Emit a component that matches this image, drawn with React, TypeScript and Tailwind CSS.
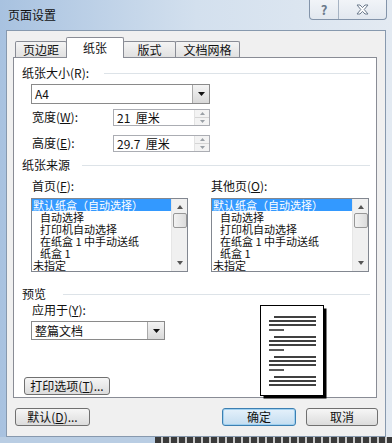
import React from 'react';

const font = "font-['Noto_Sans_CJK_SC','Noto_Sans_CJK_JP',sans-serif]";

function Key({ k }: { k: string }) {
    return <span className="underline">{k}</span>;
}

function Section({ label, lineGap }: { label: string; lineGap: string }) {
    // group caption with the etched line to the right
    return (
        <div className="flex items-center h-[14px] pl-[8px] pr-[6px]">
            <span className="leading-[14px] whitespace-nowrap">{label}</span>
            <div className={`flex-1 h-px bg-[#dde3e8] ${lineGap}`} />
        </div>
    );
}

function DropArrow() {
    return (
        <div className="w-[17px] h-full border-l border-[#a9a9a9] bg-gradient-to-b from-[#f4f4f4] to-[#d9d9d9] flex items-center justify-center">
            <svg width="7" height="4" viewBox="0 0 7 4">
                <path d="M0 0 H7 L3.5 4 Z" fill="#111" />
            </svg>
        </div>
    );
}

function Spin({ value, unit }: { value: string; unit: string }) {
    return (
        <div className="w-[97px] h-[17px] border border-[#abadb3] bg-white flex">
            <div className="flex-1 pl-[3px] leading-[15px] whitespace-pre">
                {value}  {unit}
            </div>
            <div className="w-[15px] flex flex-col border-l border-[#e3e3e3]">
                <div className="flex-1 flex items-center justify-center bg-[#f3f3f3] border-b border-[#d5d5d5]">
                    <svg width="5" height="3" viewBox="0 0 5 3"><path d="M0 3 L2.5 0 L5 3 Z" fill="#9aa0a6" /></svg>
                </div>
                <div className="flex-1 flex items-center justify-center bg-[#f3f3f3]">
                    <svg width="5" height="3" viewBox="0 0 5 3"><path d="M0 0 H5 L2.5 3 Z" fill="#9aa0a6" /></svg>
                </div>
            </div>
        </div>
    );
}

const trays = [
    { t: '默认纸盒（自动选择）', ind: false, sel: true },
    { t: '自动选择', ind: true, sel: false },
    { t: '打印机自动选择', ind: true, sel: false },
    { t: '在纸盒 1 中手动送纸', ind: true, sel: false },
    { t: '纸盒 1', ind: true, sel: false },
    { t: '未指定', ind: false, sel: false },
];

function TrayList({ width }: { width: string }) {
    return (
        <div className={`${width} h-[74px] border border-[#828790] bg-white flex overflow-hidden`}>
            <div className="flex-1 overflow-hidden text-[11px]">
                {trays.map((it) => (
                    <div
                        key={it.t}
                        className={`h-[12px] leading-[12px] whitespace-pre ${it.ind ? 'pl-[8px]' : 'pl-[1px]'} ${it.sel ? 'bg-[#3399ff] text-white' : ''}`}
                    >
                        {it.t}
                    </div>
                ))}
            </div>
            <div className="w-[16px] bg-[#f0f0f0] border-l border-[#e6e6e6] flex flex-col items-center">
                <svg className="mt-[6px]" width="6" height="4" viewBox="0 0 6 4"><path d="M0 4 L3 0 L6 4 Z" fill="#555" /></svg>
                <div className="mt-[4px] w-[14px] h-[15px] rounded-[2px] border border-[#979797] bg-gradient-to-r from-[#f2f2f2] to-[#dcdcdc]" />
                <svg className="mt-auto mb-[6px]" width="6" height="4" viewBox="0 0 6 4"><path d="M0 0 H6 L3 4 Z" fill="#555" /></svg>
            </div>
        </div>
    );
}

function PagePreview() {
    const groups = [0, 20, 40, 60];
    return (
        <svg width="67" height="94" viewBox="0 0 67 94">
            <rect x="3.5" y="3.5" width="63" height="90" fill="#000" />
            <rect x="0.5" y="0.5" width="63" height="90" fill="#fff" stroke="#000" />
            {groups.map((g, i) => (
                <g key={g} stroke="#000" strokeWidth="1.3">
                    <line x1="14" x2="56" y1={12 + g} y2={12 + g} />
                    <line x1="9" x2="56" y1={16 + g} y2={16 + g} />
                    <line x1="9" x2="56" y1={20 + g} y2={20 + g} />
                    {i < 3 && <line x1="9" x2="24" y1={25 + g} y2={25 + g} />}
                </g>
            ))}
        </svg>
    );
}

function Button({ children, width, primary }: { children: React.ReactNode; width: string; primary?: boolean }) {
    return (
        <div
            className={`${width} h-[18px] rounded-[3px] border flex items-center justify-center leading-[16px] ${
                primary
                    ? 'border-[#3c7fb1] bg-gradient-to-b from-[#e5f1fb] to-[#c4ddf0] shadow-[inset_0_0_0_1px_#9fd0f0]'
                    : 'border-[#707070] bg-gradient-to-b from-[#f6f6f6] to-[#dcdcdc]'
            }`}
        >
            {children}
        </div>
    );
}

function Tab({ label, width, active }: { label: string; width: string; active?: boolean }) {
    if (active) {
        return (
            <div className={`${width} h-[21px] -mb-px -ml-px relative z-10 bg-white border border-b-0 border-[#898c95] rounded-t-[2px] flex justify-center pt-[3px] leading-[14px]`}>
                {label}
            </div>
        );
    }
    return (
        <div className={`${width} h-[16px] -ml-px border border-b-0 border-[#898c95] rounded-t-[2px] bg-gradient-to-b from-[#f4f4f4] to-[#e1e1e1] flex justify-center pt-[1px] leading-[14px]`}>
            {label}
        </div>
    );
}

export default function App() {
    return (
        <div className={`w-[392px] h-[443px] overflow-hidden flex flex-col text-[12px] text-[#111] ${font} bg-gradient-to-r from-[#a8c2e0] via-[#d3e0ee] to-[#e3eaf2]`}>
            {/* title bar */}
            <div className="h-[30px] flex items-start shrink-0">
                <span className="ml-[8px] mt-[8px] leading-[14px] text-[12px]">页面设置</span>
                <div className="ml-auto mr-[5px] h-[20px] flex border border-t-0 border-[#8394aa] rounded-b-[4px] bg-gradient-to-b from-[#f1f4f8] to-[#e2e8ef] text-[#6b7a8c]">
                    <div className="w-[29px] flex items-center justify-center border-r border-[#a6b3c3] font-bold text-[13px] leading-none">?</div>
                    <div className="w-[47px] flex items-center justify-center">
                        <svg width="13" height="11" viewBox="0 0 13 11">
                            <path d="M1 1 H4 L6.5 3.6 L9 1 H12 L8.2 5.5 L12 10 H9 L6.5 7.4 L4 10 H1 L4.8 5.5 Z" fill="#fff" stroke="#6b7a8c" strokeWidth="1" strokeLinejoin="round" />
                        </svg>
                    </div>
                </div>
            </div>

            {/* client area */}
            <div className="mx-[6px] h-[407px] shrink-0 border border-[#8799ae] bg-[#f0f0f0] flex flex-col px-[6px]">
                <div className="flex items-end mt-[6px] ml-[3px]">
                    <Tab label="页边距" width="w-[52px]" />
                    <Tab label="纸张" width="w-[58px]" active />
                    <Tab label="版式" width="w-[53px]" />
                    <Tab label="文档网格" width="w-[65px]" />
                </div>

                <div className="w-[364px] h-[341px] bg-white border border-[#898c95] flex flex-col">
                    <div className="mt-[8px]">
                        <Section label="纸张大小(R):" lineGap="ml-[15px]" />
                    </div>
                    <div className="mt-[4px] ml-[17px] w-[179px] h-[20px] border border-[#8a8a8a] bg-white flex">
                        <div className="flex-1 pl-[3px] leading-[18px]">A4</div>
                        <DropArrow />
                    </div>
                    <div className="mt-[4px] ml-[18px] flex items-center">
                        <span className="w-[81px]">宽度(<Key k="W" />):</span>
                        <Spin value="21" unit="厘米" />
                    </div>
                    <div className="mt-[8px] ml-[18px] flex items-center">
                        <span className="w-[81px]">高度(<Key k="E" />):</span>
                        <Spin value="29.7" unit="厘米" />
                    </div>

                    <div className="mt-[6px]">
                        <Section label="纸张来源" lineGap="ml-[12px]" />
                    </div>
                    <div className="mt-[7px] ml-[17px] flex gap-[23px]">
                        <div className="flex flex-col">
                            <span className="pl-[1px] h-[14px] leading-[14px]">首页(<Key k="F" />):</span>
                            <div className="mt-[5px]">
                                <TrayList width="w-[157px]" />
                            </div>
                        </div>
                        <div className="flex flex-col">
                            <span className="h-[14px] leading-[14px]">其他页(<Key k="O" />):</span>
                            <div className="mt-[5px]">
                                <TrayList width="w-[158px]" />
                            </div>
                        </div>
                    </div>

                    <div className="mt-[15px]">
                        <Section label="预览" lineGap="ml-[17px]" />
                    </div>
                    <div className="flex">
                        <div className="w-[246px] flex flex-col">
                            <span className="mt-[2px] ml-[18px] h-[14px] leading-[14px]">应用于(<Key k="Y" />):</span>
                            <div className="mt-[4px] ml-[17px] w-[134px] h-[19px] border border-[#8a8a8a] bg-white flex">
                                <div className="flex-1 pl-[3px] leading-[17px]">整篇文档</div>
                                <DropArrow />
                            </div>
                            <div className="mt-[37px] ml-[10px]">
                                <Button width="w-[86px]">
                                    打印选项(<Key k="T" />)...
                                </Button>
                            </div>
                        </div>
                        <div className="mt-[4px]">
                            <PagePreview />
                        </div>
                    </div>
                </div>

                <div className="mt-[10px] flex">
                    <div className="ml-[2px]">
                        <Button width="w-[75px]">
                            默认(<Key k="D" />)...
                        </Button>
                    </div>
                    <div className="ml-auto mr-[1px] flex gap-[10px]">
                        <Button width="w-[74px]" primary>确定</Button>
                        <Button width="w-[72px]">取消</Button>
                    </div>
                </div>
            </div>

            {/* what shows below the window */}
            <div className="flex-1 flex">
                <div className="w-[155px] bg-[#b9cde3]" />
                <div className="flex-1 bg-[repeating-linear-gradient(90deg,#3a3a3a_0px,#3a3a3a_6px,#c8c8c8_6px,#c8c8c8_8px)]" />
            </div>
        </div>
    );
}
